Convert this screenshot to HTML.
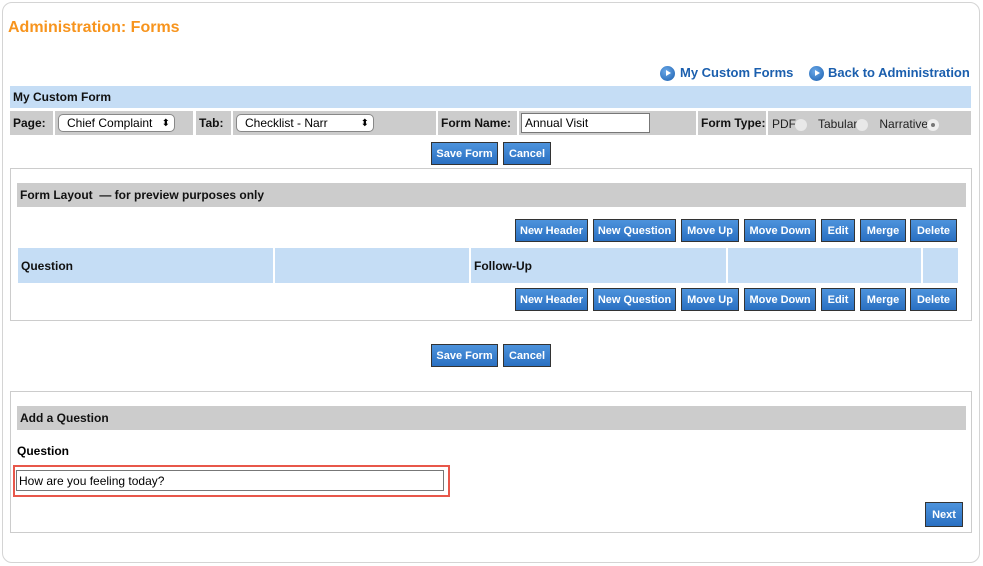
<!DOCTYPE html>
<html><head><meta charset="utf-8"><style>
*{box-sizing:border-box;margin:0;padding:0}
body{width:983px;height:566px;background:#fff;font-family:"Liberation Sans",Arial,sans-serif;position:relative;overflow:hidden}
.a{position:absolute}
.outer{left:2px;top:2px;width:978px;height:561px;border:1px solid #d4d4d4;border-radius:10px}
.title{left:8px;top:19px;color:#f7941d;font-weight:bold;font-size:16px}
.lnk{color:#1b5fae;font-weight:bold;font-size:13px;top:65px}
.ico{width:15px;height:15px;border-radius:50%;background:radial-gradient(circle at 40% 35%,#6aa8e8,#1b5fae);top:66px}
.ico:after{content:"";position:absolute;left:6px;top:4px;border-left:5px solid #fff;border-top:3.5px solid transparent;border-bottom:3.5px solid transparent}
.blue{background:#c5ddf5}
.gray{background:#cccccc}
.lbl{font-weight:bold;font-size:12px;color:#111;display:flex;align-items:center;padding-left:3px}
.btn{background:linear-gradient(#4d93dc,#2a70c2);border:1px solid #333;color:#fff;font-weight:bold;font-size:11px;display:flex;align-items:center;justify-content:center;height:23px}
.sel{background:#fff;border:1px solid #888;border-radius:5px;font-size:12px;padding-left:8px;display:flex;align-items:center;height:18px}
.sel:after{content:"⬍";position:absolute;right:4px;font-size:10px}
.box{border:1px solid #ccc}
.rad{display:inline-block;width:12px;height:12px;border-radius:50%;background:#e8e8e8;vertical-align:middle;margin-left:-1px;margin-right:11px;position:relative}
</style></head><body>
<div class="a outer"></div>
<div class="a title">Administration: Forms</div>
<div class="a ico" style="left:660px"></div><div class="a lnk" style="left:680px">My Custom Forms</div>
<div class="a ico" style="left:809px"></div><div class="a lnk" style="left:828px">Back to Administration</div>

<div class="a blue lbl" style="left:10px;top:86px;width:961px;height:22px">My Custom Form</div>
<div class="a gray lbl" style="left:10px;top:111px;width:43px;height:24px">Page:</div>
<div class="a gray" style="left:55px;top:111px;width:138px;height:24px"></div>
<div class="a sel" style="left:58px;top:114px;width:117px">Chief Complaint</div>
<div class="a gray lbl" style="left:196px;top:111px;width:35px;height:24px">Tab:</div>
<div class="a gray" style="left:233px;top:111px;width:203px;height:24px"></div>
<div class="a sel" style="left:236px;top:114px;width:138px">Checklist - Narr</div>
<div class="a gray lbl" style="left:438px;top:111px;width:79px;height:24px">Form Name:</div>
<div class="a gray" style="left:519px;top:111px;width:177px;height:24px"></div>
<div class="a" style="left:521px;top:113px;width:129px;height:20px;background:#fff;border:1px solid #777;font-size:12px;padding:2px 3px">Annual Visit</div>
<div class="a gray lbl" style="left:698px;top:111px;width:68px;height:24px">Form Type:</div>
<div class="a gray" style="left:768px;top:111px;width:203px;height:24px;font-size:12px;padding:6px 4px;color:#222">PDF<span class="rad"></span>Tabular<span class="rad"></span>Narrative<span class="rad" style="background:#eee"><span style="position:absolute;left:4px;top:4px;width:4px;height:4px;border-radius:50%;background:#777"></span></span></div>

<div class="a btn" style="left:431px;top:142px;width:67px">Save Form</div>
<div class="a btn" style="left:503px;top:142px;width:48px">Cancel</div>

<div class="a box" style="left:10px;top:168px;width:962px;height:153px"></div>
<div class="a gray lbl" style="left:17px;top:183px;width:949px;height:24px">Form Layout &nbsp;— for preview purposes only</div>
<div class="a btn" style="left:515px;top:219px;width:73px">New Header</div>
<div class="a btn" style="left:593px;top:219px;width:83px">New Question</div>
<div class="a btn" style="left:681px;top:219px;width:58px">Move Up</div>
<div class="a btn" style="left:744px;top:219px;width:72px">Move Down</div>
<div class="a btn" style="left:821px;top:219px;width:34px">Edit</div>
<div class="a btn" style="left:860px;top:219px;width:46px">Merge</div>
<div class="a btn" style="left:910px;top:219px;width:47px">Delete</div>
<div class="a blue lbl" style="left:18px;top:248px;width:255px;height:35px">Question</div>
<div class="a blue" style="left:275px;top:248px;width:194px;height:35px"></div>
<div class="a blue lbl" style="left:471px;top:248px;width:255px;height:35px">Follow-Up</div>
<div class="a blue" style="left:728px;top:248px;width:193px;height:35px"></div>
<div class="a blue" style="left:923px;top:248px;width:35px;height:35px"></div>
<div class="a btn" style="left:515px;top:288px;width:73px">New Header</div>
<div class="a btn" style="left:593px;top:288px;width:83px">New Question</div>
<div class="a btn" style="left:681px;top:288px;width:58px">Move Up</div>
<div class="a btn" style="left:744px;top:288px;width:72px">Move Down</div>
<div class="a btn" style="left:821px;top:288px;width:34px">Edit</div>
<div class="a btn" style="left:860px;top:288px;width:46px">Merge</div>
<div class="a btn" style="left:910px;top:288px;width:47px">Delete</div>

<div class="a btn" style="left:431px;top:344px;width:67px">Save Form</div>
<div class="a btn" style="left:503px;top:344px;width:48px">Cancel</div>

<div class="a box" style="left:10px;top:391px;width:962px;height:142px"></div>
<div class="a gray lbl" style="left:17px;top:406px;width:949px;height:24px">Add a Question</div>
<div class="a" style="left:17px;top:444px;font-weight:bold;font-size:12px">Question</div>
<div class="a" style="left:13px;top:465px;width:437px;height:32px;border:2px solid #e8574a"></div>
<div class="a" style="left:16px;top:470px;width:428px;height:21px;border:1px solid #777;font-size:12px;padding:3px 2px">How are you feeling today?</div>
<div class="a btn" style="left:925px;top:502px;width:38px;height:25px">Next</div>
</body></html>
